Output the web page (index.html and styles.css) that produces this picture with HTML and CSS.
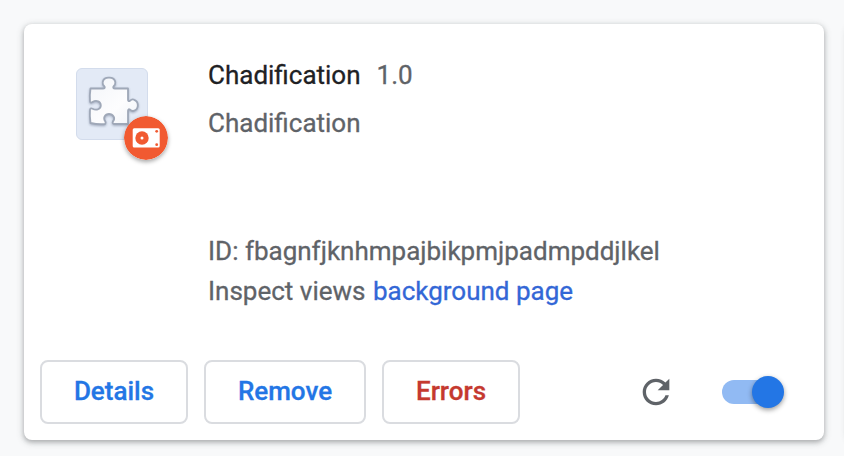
FILE: index.html
```html
<!DOCTYPE html>
<html lang="en">
<head>
<meta charset="utf-8">
<title>Extensions</title>
<link rel="stylesheet" href="styles.css">
</head>
<body>
<div class="grid">
<article class="card">
  <div class="main">
    <div class="icon">
      <svg class="puzzle" width="72" height="72" viewBox="0 0 72 72">
        <defs><linearGradient id="fill" x1="0" y1="0" x2="1" y2="1"><stop offset="0" stop-color="#f3f5f9"/><stop offset=".6" stop-color="#fdfdfe"/><stop offset="1" stop-color="#f0f3f8"/></linearGradient></defs>
        <path fill="url(#fill)" stroke="#9fa8b8" stroke-width="1.800" stroke-linejoin="round" d="M14.500 20.500H27Q29.500 20.500 28.500 18.500C27 17.300 26.500 15.500 26.700 14.200C27.500 8 38.500 8 39.300 14.200C39.500 16 38.800 17.400 37.500 18.500Q36.500 20.500 39 20.500H52V31.500Q52 34 54 32.800C55.300 31.500 57 31.200 58.200 31.800C63 33.500 63 41 58.200 42.700C57 43.200 55.300 43 54 41.600Q52 40.500 52 43V56H39Q36 56 36.800 53.700C40 50 37 46 33 46C29 46 26.500 50 29.500 53.700Q30 56.500 27.500 56.200Q21 56.500 14.500 55Q13.500 48 14 42Q14 39.500 16.500 40.700C20.500 43 24.800 41 24.800 37.500C24.800 33.500 20.500 31.500 16.500 34Q14 35.500 14 33Q13.500 27 14.500 20.500Z"/>
      </svg>
      <svg class="badge" width="44" height="44" viewBox="0 0 44 44">
        <circle cx="22" cy="22" r="22" fill="#f15a31"/>
        <rect x="8.700" y="12.300" width="27" height="19.300" rx="1.500" fill="#fff"/>
        <circle cx="18" cy="22" r="6.700" fill="#f15a31"/>
        <circle cx="18" cy="22" r="1.500" fill="#fff"/>
        <circle cx="32.700" cy="15.300" r="1.400" fill="#f15a31"/>
        <circle cx="32.700" cy="28.700" r="1.400" fill="#f15a31"/>
      </svg>
    </div>
    <div class="content">
      <div class="heading"><span class="name">Chadification</span><span>1.0</span></div>
      <div class="description">Chadification</div>
      <div class="line">ID: fbagnfjknhmpajbikpmjpadmpddjlkel</div>
      <div class="line">Inspect views <a class="link">background page</a></div>
    </div>
  </div>
  <div class="actions">
    <button class="button details">Details</button>
    <button class="button remove">Remove</button>
    <button class="button errors">Errors</button>
    <svg class="reload" width="40" height="40" viewBox="0 0 24 24"><path fill="#5f6368" d="M17.650 6.350C16.200 4.900 14.210 4 12 4c-4.420 0-7.990 3.580-7.990 8s3.570 8 7.990 8c3.730 0 6.840-2.550 7.730-6h-2.080c-.82 2.330-3.040 4-5.650 4-3.310 0-6-2.690-6-6s2.690-6 6-6c1.660 0 3.140.69 4.220 1.780L13 11h7V4l-2.350 2.350z"/></svg>
    <div class="toggle"><div class="knob"></div></div>
  </div>
</article>
<article class="card"></article>
</div>
</body>
</html>
```
FILE: styles.css
```css
* { box-sizing: border-box; }
body {
  margin: 0;
  background: #f8f9fa;
  color: #5f6368;
  font: 26px/40px Roboto, sans-serif;
}
.grid {
  display: grid;
  grid-template-columns: 800px 40px;
  gap: 24px;
  width: 100%;
  height: 456px;
  padding: 24px;
  overflow: hidden;
}
.card {
  display: flex;
  flex-direction: column;
  height: 416px;
  border-radius: 8px;
  background: #fff;
  box-shadow: 0 2px 4px rgba(60, 64, 67, .3), 0 2px 6px 2px rgba(60, 64, 67, .15);
}
.main {
  display: flex;
  flex: 1;
  padding: 31px 52px 0;
}
.icon {
  position: relative;
  width: 72px;
  height: 72px;
  margin: 13px 60px 0 0;
  border: 1px solid #d3dcec;
  border-radius: 6px;
  background: #e3eaf6;
}
.puzzle {
  display: block;
  margin: -1px;
  filter: drop-shadow(0 1px 1px rgba(90, 105, 130, .45));
}
.badge {
  position: absolute;
  left: 47px;
  top: 47px;
  border-radius: 50%;
  box-shadow: 0 2px 4px rgba(0, 0, 0, .35);
}
.content { -webkit-text-stroke: .3px currentColor; }
.heading {
  display: flex;
  gap: 16px;
}
.name { color: #202124; }
.description {
  height: 128px;
  margin-top: 8px;
}
.link {
  margin-left: 1px;
  color: #3367d6;
}
.actions {
  display: flex;
  align-items: center;
  gap: 16px;
  height: 96px;
  padding: 0 40px 0 16px;
}
.button {
  height: 64px;
  padding: 0 0 2px;
  border: 2px solid #dadce0;
  border-radius: 8px;
  background: #fff;
  color: #2376e5;
  font: 500 26px Roboto, sans-serif;
  -webkit-text-stroke: .3px currentColor;
}
.details { width: 148px; }
.remove { width: 162px; }
.errors { width: 138px; color: #c5392f; }
.reload { margin-left: auto; }
.toggle {
  position: relative;
  width: 56px;
  height: 24px;
  margin: 0 6px 0 30px;
  border-radius: 12px;
  background: #91baf3;
}
.knob {
  position: absolute;
  top: -4px;
  right: -6px;
  width: 32px;
  height: 32px;
  border-radius: 50%;
  background: #2376e5;
  box-shadow: 0 2px 5px rgba(0, 0, 0, .4);
}
```
